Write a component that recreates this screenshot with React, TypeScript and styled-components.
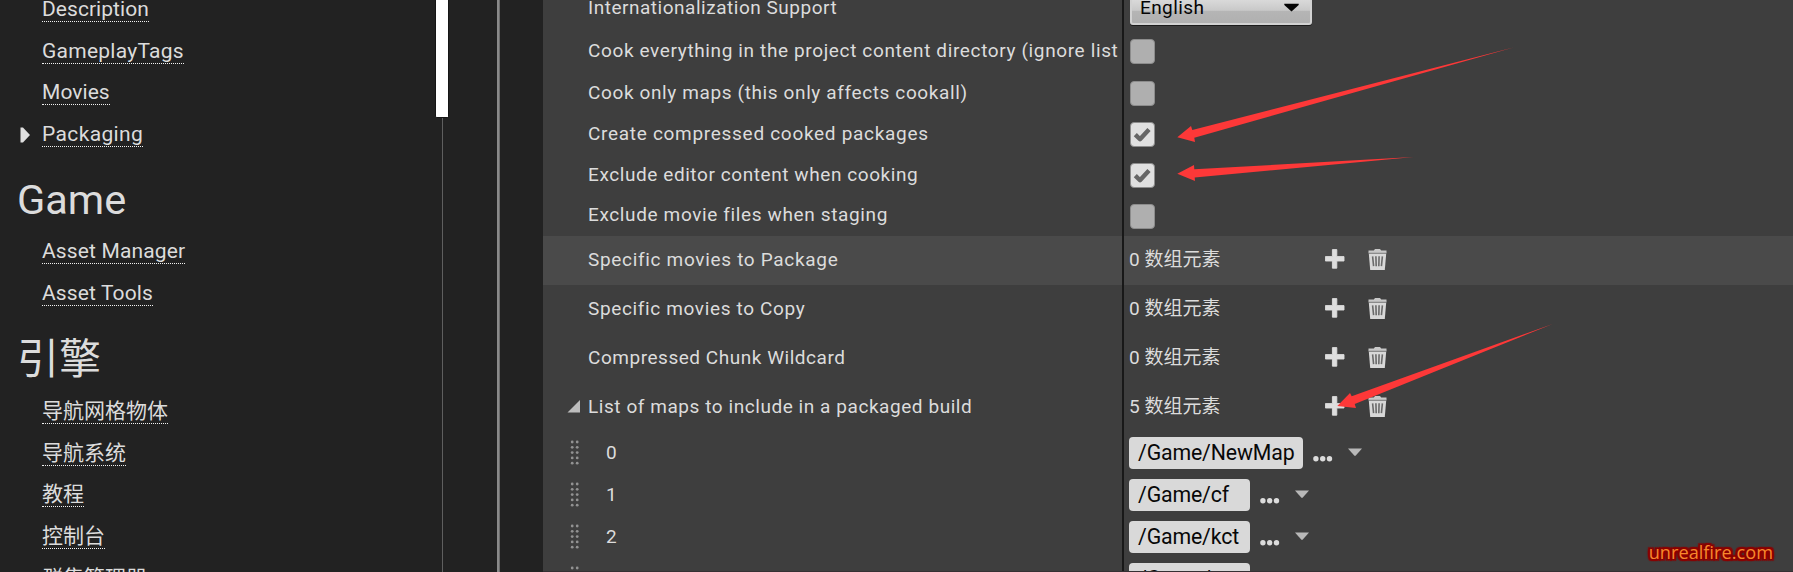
import React from "react";
import styled, { createGlobalStyle } from "styled-components";

const GlobalStyle = createGlobalStyle`
  * { box-sizing: border-box; }
  html, body { margin: 0; padding: 0; background: #222222; }
  body { overflow: hidden; }
`;

const Screen = styled.div`
  position: relative;
  display: flex;
  width: 1793px;
  height: 572px;
  overflow: hidden;
  background: #222222;
  color: #dcdcdc;
  font-family: Roboto, "Noto Sans CJK SC", sans-serif;
`;

const Sidebar = styled.nav`
  flex: 0 0 435px;
  height: 572px;
  overflow: hidden;
`;

const SidebarContent = styled.div`
  margin-top: -19.67px;
`;

const NavRow = styled.div`
  display: flex;
  align-items: flex-end;
  height: 41.667px;
  padding-left: 20px;
`;

const NavMarker = styled.span`
  flex: 0 0 22px;
  height: 20px;
`;

const NavLink = styled.a<{ $spacing?: number }>`
  display: block;
  height: 25px;
  line-height: 25px;
  font-size: 21px;
  letter-spacing: ${(p) => p.$spacing ?? 0}px;
  white-space: nowrap;
  border-bottom: 1px dotted #f2f2f2;
`;

const NavHeading = styled.h2<{ $height: number; $size?: number; $top?: number }>`
  height: ${(p) => p.$height}px;
  margin: 0;
  padding: ${(p) => p.$top ?? 29}px 0 0 17px;
  font-size: ${(p) => p.$size ?? 41.5}px;
  font-weight: 400;
  line-height: 48px;
`;

const ScrollTrack = styled.div`
  flex: 0 0 14px;
  display: flex;
  flex-direction: column;
  align-items: center;
`;

const ScrollThumb = styled.div`
  width: 14px;
  height: 118px;
  background: #ffffff;
  border: 1px solid #151515;
  border-top: 0;
  border-radius: 0 0 2px 2px;
`;

const ScrollLine = styled.div`
  flex: 1;
  width: 1px;
  background: #5f5f5f;
`;

const Gutter = styled.div`
  flex: 0 0 94px;
  padding-left: 48px;
`;

const GutterLine = styled.div`
  width: 3px;
  height: 100%;
  background: #8a8a8a;
  border-right: 1px solid #6c6c6c;
`;

const Panel = styled.main`
  flex: 1;
  height: 572px;
  overflow: hidden;
  background: #3e3e3e;
  border-bottom: 1px solid #353033;
`;

const PropertyRow = styled.div<{ $height: number; $active?: boolean }>`
  display: flex;
  height: ${(p) => p.$height}px;
  background: ${(p) => (p.$active ? "#4a4a4a" : "transparent")};
`;

const NameCell = styled.div<{ $lift?: number }>`
  flex: 0 0 581px;
  display: flex;
  align-items: center;
  padding-bottom: ${(p) => p.$lift ?? 0}px;
  overflow: hidden;
  border-right: 2px solid #181818;
`;

const Expander = styled.span`
  flex: 0 0 45px;
  display: flex;
  padding-left: 24px;
`;

const GripSlot = styled(Expander)`
  padding-left: 27px;
`;

const Label = styled.span<{ $spacing?: number }>`
  font-size: 19px;
  line-height: 22px;
  letter-spacing: ${(p) => p.$spacing ?? 0.6}px;
  white-space: nowrap;
`;

const IndexLabel = styled(Label)`
  padding-left: 18px;
`;

const ValueCell = styled.div<{ $lift?: number }>`
  display: flex;
  align-items: center;
  padding: 0 0 ${(p) => p.$lift ?? 0}px 5px;
`;

const Select = styled.div`
  display: flex;
  align-items: center;
  justify-content: space-between;
  width: 182px;
  height: 36px;
  margin: -16px 0 0 1px;
  padding: 0 11px 0 8px;
  color: #050505;
  font-size: 19px;
  letter-spacing: 0.4px;
  background: linear-gradient(#e8e8e8, #c9c9c9 60%, #b5b5b5 64%, #b0b0b0);
  border: 2px solid #d2d2d2;
  border-radius: 3px;
  box-shadow: 0 1px 0 #1c1c1c;
`;

const Checkbox = styled.span<{ $on?: boolean }>`
  display: flex;
  align-items: center;
  justify-content: center;
  width: 25px;
  height: 25px;
  margin-left: 1px;
  border: 1px solid #8c8c8c;
  border-radius: 4px;
  background: ${(p) => (p.$on ? "#e0e0e0" : "#afafaf")};
`;

const ArrayCount = styled.span`
  width: 196px;
  padding-top: 2px;
  font-size: 19px;
  line-height: 24px;
  white-space: nowrap;
`;

const IconSlot = styled.span<{ $gap: number }>`
  display: flex;
  margin-right: ${(p) => p.$gap}px;
`;

const PathInput = styled.span<{ $width: number }>`
  width: ${(p) => p.$width}px;
  height: 32px;
  padding-left: 9px;
  border-radius: 4px;
  background: #d9d9d9;
  color: #080808;
  font-size: 21.3px;
  line-height: 31px;
  letter-spacing: -0.15px;
  white-space: nowrap;
`;

const PathTools = styled.svg`
  margin-left: 9px;
`;

const Annotations = styled.svg`
  position: absolute;
  inset: 0;
  pointer-events: none;
`;

const Watermark = styled.div`
  position: absolute;
  right: 20px;
  bottom: 8px;
  color: #f7882c;
  font-family: "Open Sans", "Noto Sans", sans-serif;
  font-size: 18.2px;
  line-height: 24px;
  text-shadow: 2px 0 1px #8b0000, -2px 0 1px #8b0000, 0 2px 1px #8b0000, 0 -2px 1px #8b0000,
    2px 2px 1px #8b0000, -2px 2px 1px #8b0000, 2px -2px 1px #8b0000, -2px -2px 1px #8b0000,
    1px 1px 0 #8b0000, -1px -1px 0 #8b0000, 1px -1px 0 #8b0000, -1px 1px 0 #8b0000;
`;

const CheckMark = () => (
  <svg width="19" height="17" viewBox="0 0 19 17">
    <path
      d="M2.3 8.6 L7 13.2 L16 3.4"
      fill="none"
      stroke="#666666"
      strokeWidth="4.4"
      strokeLinejoin="round"
    />
  </svg>
);

const PlusIcon = () => (
  <svg width="20" height="20" viewBox="0 0 20 20">
    <path
      d="M7.4 0.6 h4.4 v7 h7.2 v4.4 h-7.2 v7.2 h-4.4 v-7.2 h-7 v-4.4 h7 z"
      fill="#dedede"
      stroke="#dedede"
      strokeWidth="0.9"
      strokeLinejoin="round"
    />
  </svg>
);

const TrashIcon = () => (
  <svg width="19" height="21" viewBox="0 0 19 21">
    <path d="M0.5 1.4 H5.8 L7 0 H12 L13.2 1.4 H18.5 V4 H0.5 Z" fill="#c8c8c8" />
    <path d="M0.8 4.6 H18.2 L16.8 21 H2.2 Z" fill="#d8d8d8" />
    <path d="M0.5 4.2 H18.5" stroke="#8a8a8a" strokeWidth="1" />
    <path
      d="M4.6 7.3 L5.6 17.2 M7.9 7.3 L8.2 17.2 M11.1 7.3 L10.8 17.2 M14.4 7.3 L13.4 17.2"
      stroke="#6a6a6a"
      strokeWidth="1.6"
    />
  </svg>
);

const Grip = () => (
  <svg width="10" height="26" viewBox="0 0 10 26">
    {[2, 7.3, 12.6, 17.9, 23.2].map((y) => (
      <g key={y} fill="#929292">
        <circle cx="2.2" cy={y} r="1.4" />
        <circle cx="7.2" cy={y} r="1.4" />
      </g>
    ))}
  </svg>
);

type NavItem = { text: string; spacing?: number; expandable?: boolean };

const Nav = ({ items }: { items: NavItem[] }) => (
  <>
    {items.map((item) => (
      <NavRow key={item.text}>
        <NavMarker>
          {item.expandable && (
            <svg width="11" height="17" viewBox="0 0 11 17">
              <path d="M0.5 0.5 H3 L10 8 L3 15.6 H0.5 Z" fill="#e0e0e0" />
            </svg>
          )}
        </NavMarker>
        <NavLink $spacing={item.spacing}>{item.text}</NavLink>
      </NavRow>
    ))}
  </>
);

const checks = [
  {
    text: "Cook everything in the project content directory (ignore list",
    on: false,
    height: 42,
    spacing: 0.63,
    lift: 0,
    boxLift: 0,
  },
  {
    text: "Cook only maps (this only affects cookall)",
    on: false,
    height: 42,
    spacing: 0.62,
    lift: 0,
    boxLift: 0,
  },
  { text: "Create compressed cooked packages", on: true, height: 41, spacing: 0.7, lift: 2, boxLift: 1 },
  { text: "Exclude editor content when cooking", on: true, height: 41, spacing: 0.58, lift: 2, boxLift: 1 },
  { text: "Exclude movie files when staging", on: false, height: 40, spacing: 0.63, lift: 2, boxLift: 0 },
];

const arrays = [
  { text: "Specific movies to Package", count: 0, active: true, spacing: 0.68 },
  { text: "Specific movies to Copy", count: 0, spacing: 0.64 },
  { text: "Compressed Chunk Wildcard", count: 0, spacing: 0.53 },
  { text: "List of maps to include in a packaged build", count: 5, open: true, spacing: 0.56 },
];

const maps = [
  { path: "/Game/NewMap", width: 174 },
  { path: "/Game/cf", width: 121 },
  { path: "/Game/kct", width: 121 },
  { path: "/Game/xxx", width: 121 },
];

export default function App() {
  return (
    <>
      <GlobalStyle />
      <Screen>
        <Sidebar>
          <SidebarContent>
            <Nav
              items={[
                { text: "Description", spacing: 0.05 },
                { text: "GameplayTags", spacing: 0.26 },
                { text: "Movies", spacing: 0.05 },
                { text: "Packaging", spacing: 0.36, expandable: true },
              ]}
            />
            <NavHeading $height={75.33}>Game</NavHeading>
            <Nav
              items={[
                { text: "Asset Manager", spacing: 0.14 },
                { text: "Asset Tools", spacing: 0.12 },
              ]}
            />
            <NavHeading $height={76.67} $size={42} $top={30}>
              引擎
            </NavHeading>
            <Nav
              items={[
                { text: "导航网格物体" },
                { text: "导航系统" },
                { text: "教程" },
                { text: "控制台" },
                { text: "群集管理器" },
              ]}
            />
          </SidebarContent>
        </Sidebar>
        <ScrollTrack>
          <ScrollThumb />
          <ScrollLine />
        </ScrollTrack>
        <Gutter>
          <GutterLine />
        </Gutter>
        <Panel>
          <PropertyRow $height={30}>
            <NameCell $lift={15}>
              <Expander />
              <Label $spacing={0.52}>Internationalization Support</Label>
            </NameCell>
            <ValueCell>
              <Select>
                English
                <svg width="15" height="9" viewBox="0 0 15 9">
                  <path d="M0.3 0.8 H14.7 V2 L7.5 8.4 L0.3 2 Z" fill="#050505" />
                </svg>
              </Select>
            </ValueCell>
          </PropertyRow>
          {checks.map((row) => (
            <PropertyRow key={row.text} $height={row.height}>
              <NameCell $lift={row.lift}>
                <Expander />
                <Label $spacing={row.spacing}>{row.text}</Label>
              </NameCell>
              <ValueCell $lift={row.boxLift}>
                <Checkbox $on={row.on}>{row.on && <CheckMark />}</Checkbox>
              </ValueCell>
            </PropertyRow>
          ))}
          {arrays.map((row) => (
            <PropertyRow key={row.text} $height={49} $active={row.active}>
              <NameCell $lift={1.4}>
                <Expander>
                  {row.open && (
                    <svg width="14" height="14" viewBox="0 0 14 14">
                      <path d="M13 0 V12.5 H0.5 Z" fill="#bdbdbd" />
                    </svg>
                  )}
                </Expander>
                <Label $spacing={row.spacing}>{row.text}</Label>
              </NameCell>
              <ValueCell $lift={3}>
                <ArrayCount>{row.count} 数组元素</ArrayCount>
                <IconSlot $gap={23}>
                  <PlusIcon />
                </IconSlot>
                <IconSlot $gap={0}>
                  <TrashIcon />
                </IconSlot>
              </ValueCell>
            </PropertyRow>
          ))}
          {maps.map((row, i) => (
            <PropertyRow key={row.path} $height={42}>
              <NameCell>
                <GripSlot>
                  <Grip />
                </GripSlot>
                <IndexLabel>{i}</IndexLabel>
              </NameCell>
              <ValueCell>
                <PathInput $width={row.width}>{row.path}</PathInput>
                <PathTools width="52" height="20" viewBox="0 0 52 20">
                  <g fill="#dcdcdc">
                    <circle cx="3.9" cy="15.7" r="2.7" />
                    <circle cx="10.7" cy="15.7" r="2.7" />
                    <circle cx="17.5" cy="15.7" r="2.7" />
                  </g>
                  <path d="M36 5.4 H50 L43.6 12.8 H42.4 Z" fill="#b8b8b8" />
                </PathTools>
              </ValueCell>
            </PropertyRow>
          ))}
        </Panel>
        <Annotations width="1793" height="572" viewBox="0 0 1793 572" fill="#fd3838">
          <path d="M1177.3 137.3 L1191 126 L1192.3 130 L1514.3 47.3 L1194.3 137.7 L1195 142 Z" />
          <path d="M1177.3 173.8 L1194 165 L1194.3 169.2 L1413.7 157 L1194.7 177.4 L1195 181 Z" />
          <path d="M1337.3 406 L1350 393 L1351.7 396.3 L1552.7 324 L1354.7 404 L1356 408 Z" />
        </Annotations>
        <Watermark>unrealfire.com</Watermark>
      </Screen>
    </>
  );
}
